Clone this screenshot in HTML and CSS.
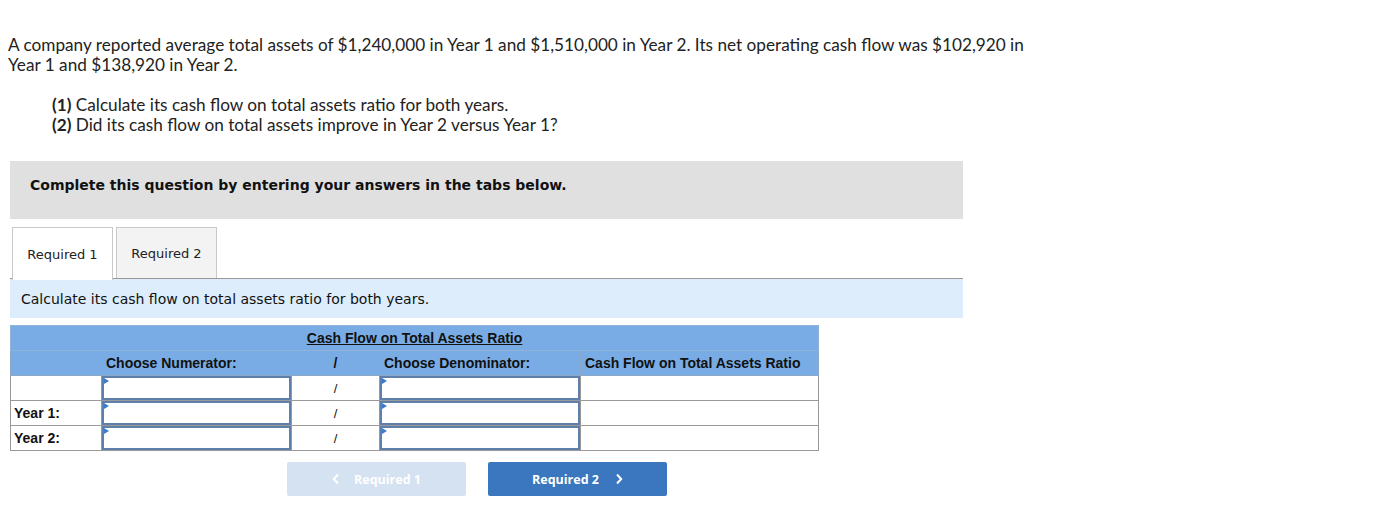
FILE: index.html
```html
<!DOCTYPE html>
<html>
<head>
<meta charset="utf-8">
<link rel="stylesheet" href="styles.css">
</head>
<body>
<div class="page">
  <p class="intro">A company reported average total assets of $1,240,000 in Year 1 and $1,510,000 in Year 2. Its net operating cash flow was $102,920 in Year 1 and $138,920 in Year 2.</p>
  <div class="parts">
    <p><b>(1)</b> Calculate its cash flow on total assets ratio for both years.</p>
    <p><b>(2)</b> Did its cash flow on total assets improve in Year 2 versus Year 1?</p>
  </div>
  <div class="instr">Complete this question by entering your answers in the tabs below.</div>
  <div class="tabs">
    <div class="tab active">Required 1</div>
    <div class="tab">Required 2</div>
  </div>
  <div class="prompt">Calculate its cash flow on total assets ratio for both years.</div>
  <table class="grid">
    <colgroup>
      <col class="c1"><col class="c2"><col class="c3"><col class="c4"><col class="c5">
    </colgroup>
    <tr class="h1"><th colspan="5"><span class="u">Cash Flow on Total Assets Ratio</span></th></tr>
    <tr class="h2">
      <th></th>
      <th class="left">Choose Numerator:</th>
      <th>/</th>
      <th class="left">Choose Denominator:</th>
      <th class="left">Cash Flow on Total Assets Ratio</th>
    </tr>
    <tr>
      <td></td>
      <td class="in"><div class="box"></div></td>
      <td class="sl">/</td>
      <td class="in"><div class="box"></div></td>
      <td></td>
    </tr>
    <tr>
      <td class="lbl">Year 1:</td>
      <td class="in"><div class="box"></div></td>
      <td class="sl">/</td>
      <td class="in"><div class="box"></div></td>
      <td></td>
    </tr>
    <tr>
      <td class="lbl">Year 2:</td>
      <td class="in"><div class="box"></div></td>
      <td class="sl">/</td>
      <td class="in"><div class="box"></div></td>
      <td></td>
    </tr>
  </table>
  <div class="nav">
    <button class="btn prev"><svg class="chev l" width="8" height="12" viewBox="0 0 8 12"><polyline points="6,1.5 1.8,6 6,10.5" fill="none" stroke="#fff" stroke-width="2"/></svg>Required 1</button>
    <button class="btn next">Required 2<svg class="chev r" width="8" height="12" viewBox="0 0 8 12"><polyline points="2,1.5 6.2,6 2,10.5" fill="none" stroke="#fff" stroke-width="2"/></svg></button>
  </div>
</div>
</body>
</html>
```
FILE: styles.css
```css
html, body { margin: 0; padding: 0; background: #fff; }
.page { padding: 35px 0 0 8px; }
.intro {
  margin: 0;
  width: 1035px;
  font-family: "Lato", "Open Sans", sans-serif;
  font-size: 17.2px;
  line-height: 20px;
  color: #222;
}
.parts { margin: 20px 0 0 44px; font-family: "Lato", "Open Sans", sans-serif; font-size: 17.2px; line-height: 20px; color: #222; }
.parts p { margin: 0; }
.parts b { font-weight: 700; }
.instr {
  margin: 26px 0 0 2px;
  width: 933px;
  height: 58px;
  padding: 15px 0 0 20px;
  box-sizing: border-box;
  width: 953px;
  background: #e0e0e0;
  line-height: 18px;
  font-family: "DejaVu Sans", Verdana, sans-serif;
  font-weight: 700;
  font-size: 14px;
  color: #111;
}
.tabs {
  margin: 8px 0 0 2px;
  width: 953px;
  display: flex;
  gap: 3px;
  padding-left: 2px;
  box-sizing: border-box;
  border-bottom: 1px solid #999;
  height: 52px;
  align-items: flex-start;
}
.tab {
  width: 99px;
  height: 50px;
  border: 1px solid #c8c8c8;
  border-bottom: none;
  background: #f3f3f3;
  font-family: "DejaVu Sans", Verdana, sans-serif;
  font-size: 13px;
  color: #222;
  display: flex;
  align-items: center;
  justify-content: center;
}
.tab.active { background: #fff; height: 52px; margin-bottom: -1px; position: relative; }
.prompt {
  margin-left: 2px;
  width: 942px;
  height: 39px;
  padding-left: 11px;
  background: #ddedfb;
  display: flex;
  align-items: center;
  font-family: "DejaVu Sans", Verdana, sans-serif;
  font-size: 14px;
  color: #111;
}
.grid {
  margin: 7px 0 0 2px;
  border-collapse: collapse;
  width: 808px;
  table-layout: fixed;
  font-family: "Liberation Sans", Arial, sans-serif;
  font-size: 14px;
  color: #111;
}
.c1 { width: 91px; } .c2 { width: 190px; } .c3 { width: 88px; } .c4 { width: 201px; } .c5 { width: 238px; }
.grid th, .grid td { border: 1px solid #999; height: 24px; padding: 0; }
.grid th { background: #79ace4; font-weight: 700; text-align: center; }
.grid .h1 th { border-color: #8fb3d9; }
.grid .h2 th { border-color: #8ea9c8; }
.grid th.left { text-align: left; padding-left: 4px; }
.u { text-decoration: underline; }
.grid td.lbl { font-weight: 700; padding-left: 3px; }
.grid td.sl { text-align: center; font-size: 13px; }
.grid td.in { position: relative; }
.box {
  position: absolute; inset: 0;
  border: 2px solid #5e7fa9;
  background: #fff;
}
.box::before {
  content: "";
  position: absolute; left: 0; top: 0;
  border-left: 5px solid #3c7ccc;
  border-top: 3px solid transparent;
  border-bottom: 3px solid transparent;
}
.nav { margin: 11px 0 0 279px; display: flex; gap: 22px; }
.btn {
  width: 179px; height: 34px;
  border: none; border-radius: 2px;
  font-family: "Open Sans", "Lato", sans-serif;
  font-weight: 700; font-size: 12.5px;
  color: #fff;
  display: flex; align-items: center; justify-content: center;
  padding: 0;
}
.prev { background: #d5e2f1; }
.next { background: #3a77be; }
.chev.l { margin-right: 14px; }
.chev.r { margin-left: 16px; }
```
